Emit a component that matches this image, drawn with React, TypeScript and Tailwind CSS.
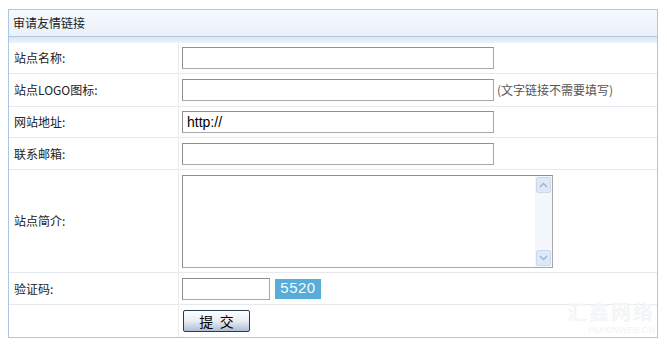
import React from 'react';

const FONT = { fontFamily: '"Noto Sans CJK SC", "DejaVu Sans", sans-serif' };

const inputCls =
    'h-[22px] border border-[#a8a8a8] border-t-[#8f8f8f] border-l-[#8f8f8f] bg-white px-1 text-[13px] text-black outline-none';

const Row = ({ label, h, children, last }: { label: string; h: string; children?: React.ReactNode; last?: boolean }) => (
    <div className={`flex ${h} ${last ? '' : 'border-b border-[#e6e9ee]'}`}>
        <div className="w-[170px] shrink-0 flex items-center pl-[5px] border-r border-[#ececec] text-[12px] text-[#222]">
            {label}
        </div>
        <div className="flex-1 flex items-center pl-[3px]">{children}</div>
    </div>
);

const Arrow = ({ up }: { up?: boolean }) => (
    <div className="h-[16px] w-[15px] mx-auto bg-[#dde9f8] border border-[#c9d9ee] rounded-[2px] flex items-center justify-center">
        <svg width="9" height="6" viewBox="0 0 9 6">
            <path d={up ? 'M1 5 L4.5 1.5 L8 5' : 'M1 1 L4.5 4.5 L8 1'} fill="none" stroke="#9fb6d6" strokeWidth="1.5" />
        </svg>
    </div>
);

export default function App() {
    return (
        <div className="w-[667px] h-[346px] bg-white pt-[9px] pl-[8px]" style={FONT}>
            <div className="relative w-[650px] border border-[#a9c6e3]">
                <div className="h-[27px] flex items-center pl-[4px] text-[12px] text-[#222] bg-gradient-to-b from-[#f6f9fd] to-[#eaf1f9] border-b border-[#b3c8e0]">
                    审请友情链接
                </div>
                <div className="h-[6px] bg-gradient-to-b from-[#dae7f5] to-[#edf3fa]" />

                <Row label="站点名称:" h="h-[31px]">
                    <input className={`${inputCls} w-[312px]`} />
                </Row>
                <Row label="站点LOGO图标:" h="h-[33px]">
                    <input className={`${inputCls} w-[312px]`} />
                    <span className="ml-[3px] text-[12px] text-[#555]">(文字链接不需要填写)</span>
                </Row>
                <Row label="网站地址:" h="h-[31px]">
                    <input
                        className={`${inputCls} w-[312px] text-[14px]`}
                        defaultValue="http://"
                        style={{ fontFamily: '"Liberation Sans", Arial, sans-serif' }}
                    />
                </Row>
                <Row label="联系邮箱:" h="h-[32px]">
                    <input className={`${inputCls} w-[312px]`} />
                </Row>
                <Row label="站点简介:" h="h-[103px]">
                    <div className="flex w-[371px] h-[93px] border border-[#a8a8a8] border-t-[#8f8f8f] border-l-[#8f8f8f] bg-white">
                        <textarea className="flex-1 resize-none outline-none text-[12px] px-1" />
                        <div className="w-[17px] bg-[#f4f8fd] flex flex-col justify-between py-[1px]">
                            <Arrow up />
                            <Arrow />
                        </div>
                    </div>
                </Row>
                <Row label="验证码:" h="h-[32px]">
                    <input className={`${inputCls} w-[88px] h-[21px]`} />
                    <div
                        className="ml-[5px] w-[46px] h-[20px] bg-[#58acd8] text-[#f4fbff] text-[15px] flex items-center justify-center tracking-[0.5px]"
                        style={{ fontFamily: '"Liberation Sans", Arial, sans-serif' }}
                    >
                        5520
                    </div>
                </Row>
                <Row label="" h="h-[32px]" last>
                    <button className="ml-[1px] w-[67px] h-[22px] border border-[#2a3b57] rounded-[2px] bg-gradient-to-b from-white via-[#e9edf4] to-[#aebcd3] text-[14px] text-black leading-none">
                        提&nbsp;&nbsp;交
                    </button>
                </Row>

                <div className="absolute right-[2px] bottom-[2px] flex flex-col items-end pointer-events-none">
                    <span className="text-[20px] font-bold text-[#f3f5f7] leading-none tracking-[2px]">汇鑫网络</span>
                    <span className="text-[9px] text-[#f1f3f5] leading-none mt-[4px]" style={{ fontFamily: '"Liberation Sans", sans-serif' }}>
                        HUIXINWEB.CN
                    </span>
                </div>
            </div>
        </div>
    );
}
